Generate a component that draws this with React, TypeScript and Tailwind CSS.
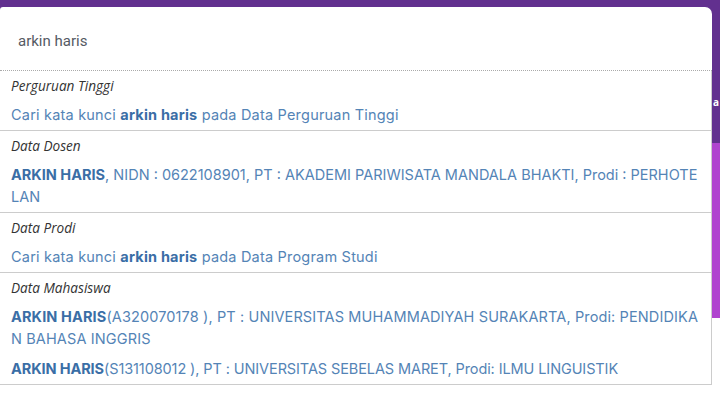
import React from 'react';

type Item = { bold: string; rest: string; tracking: string };
type Group = { title: string; items: Item[] };

const query = 'arkin haris';

const groups: Group[] = [
  {
    title: 'Perguruan Tinggi',
    items: [{ bold: '', rest: 'pt', tracking: 'tracking-[0.2px]' }],
  },
  {
    title: 'Data Dosen',
    items: [
      {
        bold: 'ARKIN HARIS',
        rest: ', NIDN : 0622108901, PT : AKADEMI PARIWISATA MANDALA BHAKTI, Prodi : PERHOTELAN',
        tracking: 'tracking-normal',
      },
    ],
  },
  {
    title: 'Data Prodi',
    items: [{ bold: '', rest: 'prodi', tracking: 'tracking-[0.2px]' }],
  },
  {
    title: 'Data Mahasiswa',
    items: [
      {
        bold: 'ARKIN HARIS',
        rest: '(A320070178 ), PT : UNIVERSITAS MUHAMMADIYAH SURAKARTA, Prodi: PENDIDIKAN BAHASA INGGRIS',
        tracking: 'tracking-[0.12px]',
      },
      {
        bold: 'ARKIN HARIS',
        rest: '(S131108012 ), PT : UNIVERSITAS SEBELAS MARET, Prodi: ILMU LINGUISTIK',
        tracking: 'tracking-[-0.1px]',
      },
    ],
  },
];

const searchTarget: Record<string, string> = {
  pt: 'Data Perguruan Tinggi',
  prodi: 'Data Program Studi',
};

function ResultRow({ item }: { item: Item }) {
  if (!item.bold) {
    return (
      <div className={`px-[11px] py-1 leading-[22px] ${item.tracking}`}>
        Cari kata kunci <strong className="font-bold text-[#3a6ea6]">{query}</strong> pada{' '}
        {searchTarget[item.rest]}
      </div>
    );
  }
  return (
    <div className={`px-[11px] py-1 leading-[22px] break-all ${item.tracking}`}>
      <strong className="font-bold text-[#3a6ea6]">{item.bold}</strong>
      <span>{item.rest}</span>
    </div>
  );
}

export default function App() {
  return (
    <div className="flex h-[397px] w-[720px] overflow-hidden bg-white">
      {/* search card */}
      <div className="flex w-[712px] flex-col bg-[#62308f] pt-[7px]">
        <div className="flex h-16 items-center rounded-tr-[7px] rounded-tl-[3px] border-b border-dotted border-[#aaaaaa] bg-white px-[18px] pt-[6px]">
          <span className="text-[15px] text-[#555a63] [font-family:Roboto,'Open_Sans',sans-serif]">
            {query}
          </span>
        </div>
        <div className="border-r border-b border-[#cccccc] bg-white text-[14.5px] text-[#5484b6] [font-family:Inter,'Noto_Sans',sans-serif]">
          {groups.map((g, i) => (
            <div key={g.title} className={i > 0 ? 'border-t border-[#cccccc]' : ''}>
              <div className="px-[11px] pt-[6px] pb-[5px] text-[13.6px] leading-[18px] italic text-[#333333] [font-family:'Open_Sans',sans-serif]">
                {g.title}
              </div>
              {g.items.map((it, j) => (
                <ResultRow key={j} item={it} />
              ))}
            </div>
          ))}
        </div>
        <div className="flex-1 bg-white" />
      </div>

      {/* page behind */}
      <div className="flex w-2 flex-col">
        <div className="relative h-[143px] bg-[#62308f]">
          <span className="absolute left-[1px] top-[97px] text-[10px] font-bold leading-none text-white [font-family:'Open_Sans',sans-serif]">
            a
          </span>
        </div>
        <div className="h-[175px] bg-[#b044cf]" />
        <div className="flex-1 bg-white" />
      </div>
    </div>
  );
}
